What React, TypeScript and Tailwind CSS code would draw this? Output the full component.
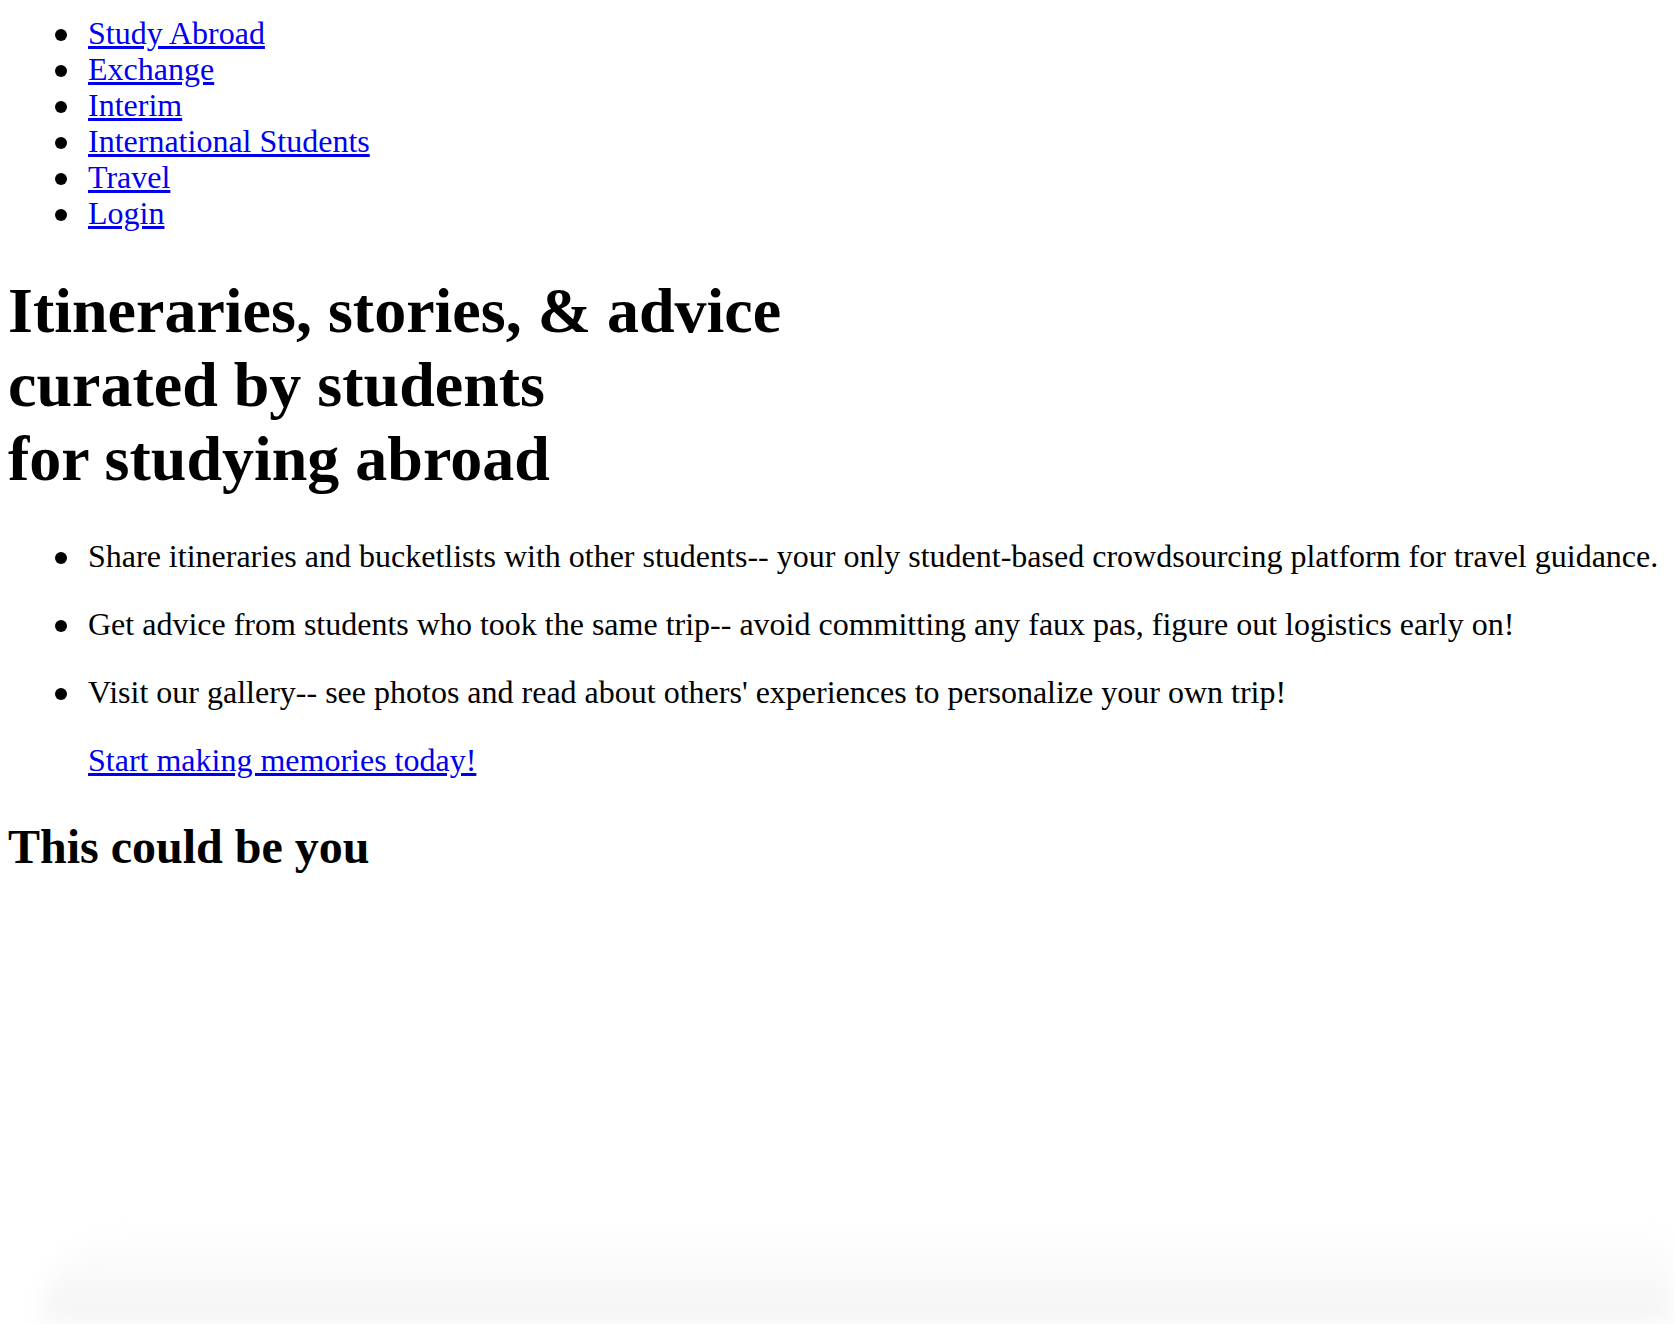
import React from "react";

const navItems = ["Study Abroad", "Exchange", "Interim", "International Students", "Travel", "Login"];

const points = [
  "Share itineraries and bucketlists with other students-- your only student-based crowdsourcing platform for travel guidance.",
  "Get advice from students who took the same trip-- avoid committing any faux pas, figure out logistics early on!",
  "Visit our gallery-- see photos and read about others' experiences to personalize your own trip!",
];

function Bullet() {
  return <span className="mt-[14px] mr-[21px] h-[12px] w-[12px] shrink-0 rounded-full bg-black" />;
}

export default function App() {
  return (
    <div className="relative min-h-[1324px] bg-white font-['Liberation_Serif','Times_New_Roman',serif] text-black">
      <div className="px-[8px] pt-[15px]">
        <nav>
          <ul className="pl-[47px] text-[32px] leading-[36px]">
            {navItems.map((item) => (
              <li key={item} className="flex">
                <Bullet />
                <a href="#" className="text-[#0000ee] underline">
                  {item}
                </a>
              </li>
            ))}
          </ul>
        </nav>

        <h1 className="mt-[43px] text-[64px] font-bold leading-[74px]">
          Itineraries, stories, &amp; advice
          <br />
          curated by students
          <br />
          for studying abroad
        </h1>

        <ul className="mt-[42px] flex flex-col gap-[32px] pl-[47px] text-[32px] leading-[36px]">
          {points.map((p) => (
            <li key={p} className="flex">
              <Bullet />
              <span>{p}</span>
            </li>
          ))}
          <li className="pl-[33px]">
            <a href="#" className="text-[#0000ee] underline">
              Start making memories today!
            </a>
          </li>
        </ul>

        <h2 className="mt-[41px] text-[48px] font-bold leading-[55px]">This could be you</h2>
      </div>

      <div className="pointer-events-none fixed bottom-0 left-[40px] right-0 h-[100px] rounded-tl-[140px] bg-gradient-to-b from-white/0 to-[#f4f4f4] blur-[12px]" />
    </div>
  );
}
